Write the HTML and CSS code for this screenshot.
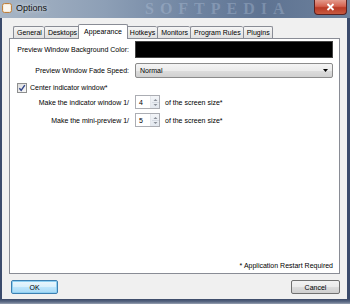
FILE: index.html
```html
<!DOCTYPE html>
<html>
<head>
<meta charset="utf-8">
<link rel="stylesheet" href="styles.css">
</head>
<body>
<div class="window">
  <div class="titlebar">
    <svg class="app-icon" width="10" height="10" viewBox="0 0 10 10">
      <rect x="0.5" y="0.5" width="9" height="9" rx="2" fill="#f4ead8" stroke="#c0803c"/>
      <rect x="2" y="2" width="6" height="6" rx="1" fill="#fbf6ee"/>
    </svg>
    <span class="title">Options</span>
    <span class="wm">SOFTPEDIA</span>
    <div class="close">
      <svg width="9" height="8" viewBox="0 0 9 8"><path d="M1.5 1 L7.5 7 M7.5 1 L1.5 7" stroke="#fff" stroke-width="1.8"/></svg>
    </div>
  </div>
  <div class="client">
    <div class="tabs">
      <div class="tab">General</div>
      <div class="tab">Desktops</div>
      <div class="tab active">Appearance</div>
      <div class="tab">Hotkeys</div>
      <div class="tab">Monitors</div>
      <div class="tab">Program Rules</div>
      <div class="tab last">Plugins</div>
    </div>
    <div class="page">
      <div class="form">
        <span class="label">Preview Window Background Color:</span>
        <div class="swatch"></div>
        <span class="label">Preview Window Fade Speed:</span>
        <div class="combo">
          <span>Normal</span>
          <svg width="5" height="3" viewBox="0 0 5 3"><path d="M0 0 H5 L2.5 3 Z" fill="#000"/></svg>
        </div>
      </div>
      <div class="check-row">
        <span class="checkbox"><svg width="8" height="8" viewBox="0 0 8 8"><path d="M1.3 4.2 L3.2 6.3 L6.8 1.2" fill="none" stroke="#33478a" stroke-width="1.4"/></svg></span>
        <span>Center indicator window*</span>
      </div>
      <div class="form spins">
        <span class="label">Make the indicator window 1/</span>
        <div class="spin-row">
          <div class="spin"><span class="val">4</span><span class="arrows"><svg width="7" height="11" viewBox="0 0 7 11"><path d="M3.5 2 L5.5 4 H1.5 Z M3.5 9 L5.5 7 H1.5 Z" fill="#8a8f99"/><path d="M0 5.5 H7" stroke="#d6dbe3"/></svg></span></div>
          <span>of the screen size*</span>
        </div>
        <span class="label">Make the mini-preview 1/</span>
        <div class="spin-row">
          <div class="spin"><span class="val">5</span><span class="arrows"><svg width="7" height="11" viewBox="0 0 7 11"><path d="M3.5 2 L5.5 4 H1.5 Z M3.5 9 L5.5 7 H1.5 Z" fill="#8a8f99"/><path d="M0 5.5 H7" stroke="#d6dbe3"/></svg></span></div>
          <span>of the screen size*</span>
        </div>
      </div>
      <div class="note">* Application Restart Required</div>
    </div>
    <div class="buttons">
      <button class="btn default">OK</button>
      <button class="btn">Cancel</button>
    </div>
  </div>
  <div class="bottom-frame"></div>
</div>
</body>
</html>
```
FILE: styles.css
```css
* { box-sizing: border-box; }
html, body { margin: 0; padding: 0; }
body {
  width: 350px;
  height: 304px;
  overflow: hidden;
  font-family: "Liberation Sans", Arial, sans-serif;
  font-size: 7px;
  color: #000;
  background: #3d4d6e;
}
.window {
  width: 350px;
  height: 304px;
  display: flex;
  flex-direction: column;
  background: linear-gradient(90deg, #3b4b6c 0px, #3b4b6c 2px, transparent 2px, transparent 347px, #3b4b6c 347px);
}
.titlebar {
  position: relative;
  height: 18px;
  display: flex;
  align-items: center;
  padding-left: 2px;
  overflow: hidden;
  background: linear-gradient(90deg, #a7b5c5 0%, #8d9fb6 30%, #6f84a1 55%, #5e7392 75%, #6d819c 100%);
}
.app-icon { flex: none; margin-top: -2px; }
.title {
  margin-left: 4px;
  margin-top: -3px;
  font-size: 9px;
  color: #111;
  text-shadow: 0 0 4px rgba(255,255,255,0.8);
}
.wm {
  position: absolute;
  left: 145px;
  top: 0;
  line-height: 18px;
  font-family: "Liberation Serif", serif;
  font-weight: bold;
  font-size: 16px;
  letter-spacing: 6px;
  color: rgba(200, 215, 235, 0.28);
  white-space: nowrap;
}
.close {
  position: absolute;
  right: 3px;
  top: 0;
  width: 33px;
  height: 15px;
  border: 1px solid #5a2020;
  border-top: none;
  border-radius: 0 0 4px 4px;
  background: linear-gradient(#e39a8c 0%, #d4624f 45%, #b93a26 55%, #c75a40 100%);
  display: flex;
  align-items: center;
  justify-content: center;
}
.client {
  height: 281px;
  margin: 0 3px 0 2px;
  padding: 6px 7px 5px 7px;
  background: #f0f0f0;
  display: flex;
  flex-direction: column;
}
.tabs {
  height: 15px;
  display: flex;
  align-items: flex-end;
  padding-left: 4px;
}
.tab {
  height: 13px;
  padding: 0 2px 1px 3px;
  border: 1px solid #898c95;
  border-bottom: none;
  border-right: none;
  border-radius: 2px 2px 0 0;
  background: linear-gradient(#f5f5f5, #dedede);
  display: flex;
  align-items: center;
  white-space: nowrap;
}
.tab:nth-child(2), .tab.last { border-right: 1px solid #898c95; }
.tab.active {
  position: relative;
  z-index: 2;
  height: 15px;
  margin: 0 -2px;
  padding: 0 5px 2px;
  border-right: 1px solid #898c95;
  background: #fff;
}
.page {
  flex: 1;
  margin-top: -1px;
  border: 1px solid #898c95;
  background: #fff;
  padding: 2px 6px 4px 0;
  display: flex;
  flex-direction: column;
}
.form {
  display: grid;
  grid-template-columns: 119px 198px;
  column-gap: 6px;
  row-gap: 5px;
  align-items: center;
}
.label { text-align: right; white-space: nowrap; }
.swatch {
  height: 17px;
  background: #000;
  border: 1px solid #444;
}
.combo {
  height: 15px;
  border: 1px solid #8b8b8b;
  border-radius: 2px;
  background: linear-gradient(#f4f4f4 0%, #ebebeb 50%, #dddddd 51%, #d0d0d0 100%);
  display: flex;
  align-items: center;
  justify-content: space-between;
  padding: 0 4px 0 4px;
}
.check-row {
  margin-top: 4px;
  height: 11px;
  padding-left: 7px;
  display: flex;
  align-items: center;
  gap: 3px;
}
.checkbox {
  width: 10px;
  height: 10px;
  border: 1px solid #8e8f8f;
  background: linear-gradient(135deg, #dcdcdc, #fafafa);
  display: flex;
  align-items: center;
  justify-content: center;
}
.spins { margin-top: 2px; row-gap: 4px; }
.spin-row {
  display: flex;
  align-items: center;
  gap: 5px;
}
.spin {
  width: 25px;
  height: 14px;
  border: 1px solid #abadb3;
  background: #fff;
  display: flex;
  align-items: center;
  justify-content: space-between;
  padding-left: 3px;
}
.arrows {
  width: 9px;
  height: 12px;
  border-left: 1px solid #e3e6eb;
  background: linear-gradient(#f3f5f8, #e3e8ef);
  display: flex;
  align-items: center;
  justify-content: center;
}
.note {
  margin-top: auto;
  text-align: right;
}
.buttons {
  margin-top: 6px;
  height: 14px;
  display: flex;
  justify-content: space-between;
}
.btn {
  height: 14px;
  margin: 0;
  padding: 0;
  font-family: inherit;
  font-size: 7px;
  color: #000;
  border: 1px solid #707070;
  border-radius: 2px;
  background: linear-gradient(#f2f2f2 0%, #ebebeb 50%, #dddddd 51%, #cfcfcf 100%);
  width: 49px;
}
.btn.default {
  width: 47px;
  margin-left: 2px;
  border-color: #3c7fb1;
  box-shadow: inset 0 0 0 1px #8fd0f2;
  background: linear-gradient(#eaf6fd 0%, #d9f0fc 50%, #bee6fd 51%, #a7d9f5 100%);
}
.bottom-frame {
  flex: 1;
  background: linear-gradient(#3a4867, #5d6c86 60%, #9aa3b3);
}
```
